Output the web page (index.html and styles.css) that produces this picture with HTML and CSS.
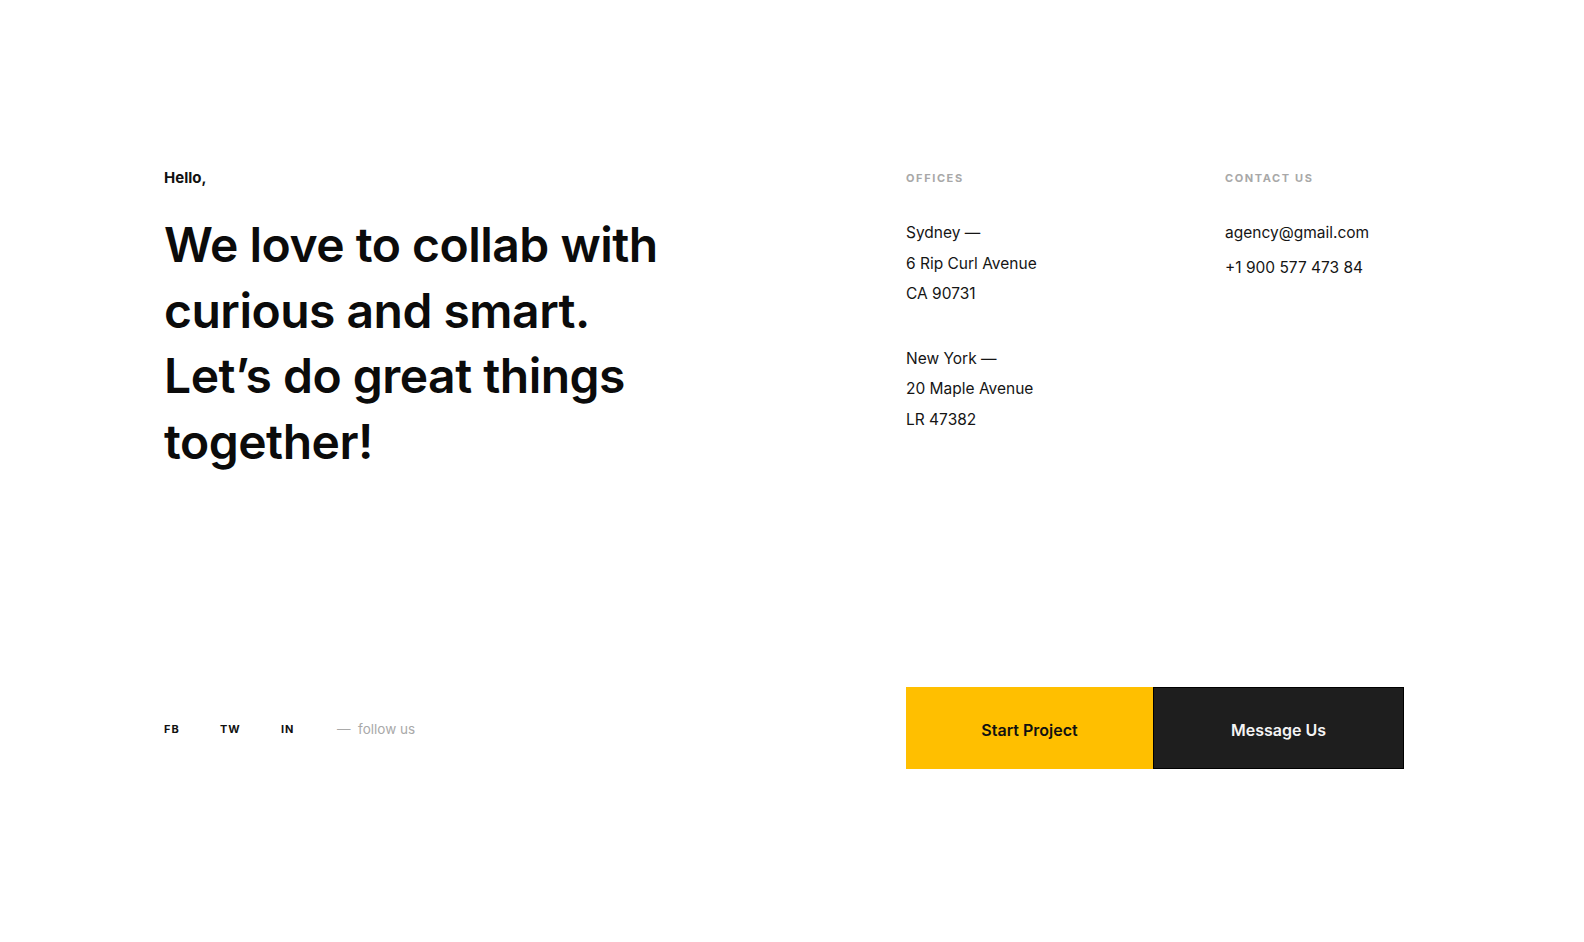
FILE: index.html
```html
<!DOCTYPE html>
<html lang="en">
<head>
<meta charset="utf-8">
<title>Contact</title>
<link rel="stylesheet" href="styles.css">
</head>
<body>
<main class="page">
  <section class="intro">
    <p class="hello">Hello,</p>
    <h1 class="headline">We love to collab with<br>curious and smart.<br>Let’s do great things<br>together!</h1>
  </section>
  <section class="info">
    <div class="col offices">
      <h2 class="label">OFFICES</h2>
      <div class="address">
        <p>Sydney —</p>
        <p>6 Rip Curl Avenue</p>
        <p>CA 90731</p>
      </div>
      <div class="address">
        <p>New York —</p>
        <p>20 Maple Avenue</p>
        <p>LR 47382</p>
      </div>
    </div>
    <div class="col contact">
      <h2 class="label">CONTACT US</h2>
      <div class="contact-list">
        <p>agency@gmail.com</p>
        <p>+1 900 577 473 84</p>
      </div>
    </div>
  </section>
  <nav class="social">
    <a class="social-link" href="#">FB</a>
    <a class="social-link" href="#">TW</a>
    <a class="social-link" href="#">IN</a>
    <span class="follow">— &nbsp;follow us</span>
  </nav>
  <div class="actions">
    <a class="btn btn-yellow" href="#">Start Project</a>
    <a class="btn btn-dark" href="#">Message Us</a>
  </div>
</main>
</body>
</html>
```

FILE: styles.css
```css
* { box-sizing: border-box; }
html, body { margin: 0; padding: 0; background: #fff; }
body {
  font-family: "Inter", "Noto Sans", "Liberation Sans", sans-serif;
  color: #111;
}
p, h1, h2 { margin: 0; }
a { text-decoration: none; color: inherit; }

.page {
  display: grid;
  grid-template-columns: 742px 498px;
  grid-template-rows: 519px auto;
  padding: 168px 0 0 164px;
}

.hello {
  font-size: 15px;
  font-weight: 700;
  line-height: 20px;
  color: #111;
}
.headline {
  margin-top: 24px;
  font-size: 48px;
  font-weight: 600;
  line-height: 65.5px;
  letter-spacing: -0.5px;
  color: #0b0b0b;
}

.info {
  display: grid;
  grid-template-columns: 319px 1fr;
}
.label {
  font-size: 11px;
  font-weight: 700;
  letter-spacing: 1.6px;
  line-height: 20px;
  color: #a8a8a8;
  margin-bottom: 30px;
}
.address p {
  font-size: 15.5px;
  line-height: 30.5px;
  color: #151515;
}
.address + .address { margin-top: 34px; }
.contact-list { margin-top: -3px; }
.contact-list p {
  font-size: 15.5px;
  line-height: 35px;
  color: #151515;
}

.social {
  display: flex;
  align-items: center;
  align-self: center;
  padding-top: 2px;
}
.social-link {
  font-size: 11px;
  font-weight: 700;
  letter-spacing: 1px;
  color: #111;
}
.social-link:nth-child(1) { width: 56px; }
.social-link:nth-child(2) { width: 61px; }
.social-link:nth-child(3) { width: 56px; }
.follow {
  font-size: 13.5px;
  color: #a9a9a9;
}

.actions {
  display: flex;
}
.btn {
  display: flex;
  align-items: center;
  justify-content: center;
  height: 82px;
  font-size: 16px;
  font-weight: 600;
  padding-top: 4px;
}
.btn-yellow {
  width: 247px;
  background: #ffbf00;
  color: #111;
}
.btn-dark {
  width: 251px;
  background: #1e1e1e;
  border: 1px solid #000;
  color: #f4f4f4;
}
```
